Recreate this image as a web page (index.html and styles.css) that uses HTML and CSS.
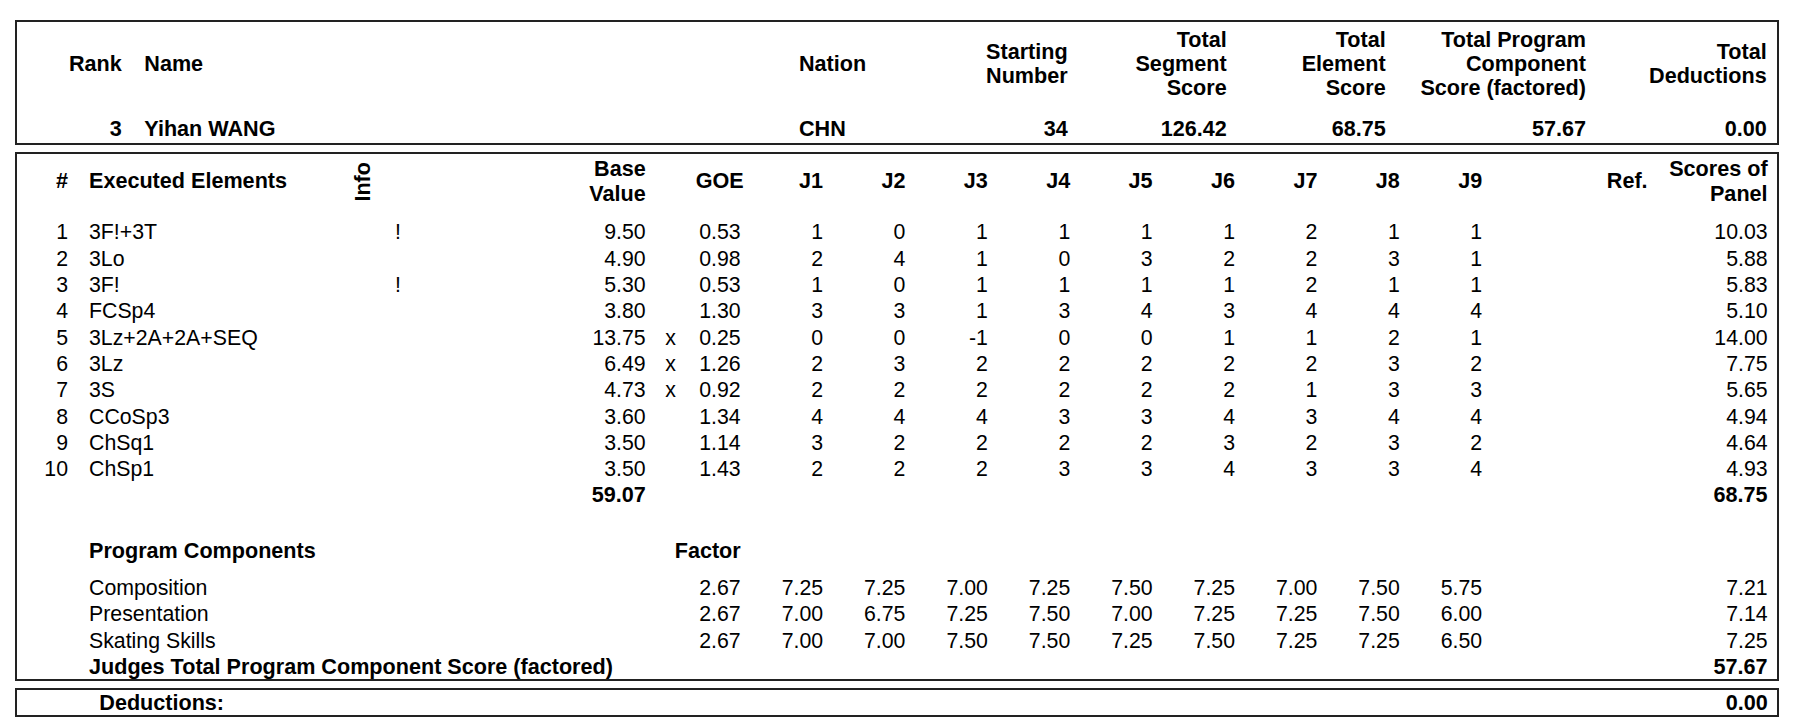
FILE: index.html
```html
<!DOCTYPE html>
<html>
<head>
<meta charset="utf-8">
<title>Judges Details per Skater</title>
<link rel="stylesheet" href="styles.css">
</head>
<body>
<div class="page">
  <div class="box summary">
    <div class="sum-grid sum-head">
      <div class="r">Rank</div>
      <div class="name">Name</div>
      <div>Nation</div>
      <div class="r">Starting<br>Number</div>
      <div class="r">Total<br>Segment<br>Score</div>
      <div class="r">Total<br>Element<br>Score</div>
      <div class="r">Total Program<br>Component<br>Score (factored)</div>
      <div class="r">Total<br>Deductions</div>
    </div>
    <div class="sum-grid sum-data">
      <div class="r">3</div>
      <div class="name">Yihan WANG</div>
      <div>CHN</div>
      <div class="r">34</div>
      <div class="r">126.42</div>
      <div class="r">68.75</div>
      <div class="r">57.67</div>
      <div class="r">0.00</div>
    </div>
  </div>

  <div class="box elements">
    <div class="eg el-head">
      <div class="r">#</div>
      <div class="name">Executed Elements</div>
      <div class="info-h">Info</div>
      <div></div>
      <div class="r">Base<br>Value</div>
      <div></div>
      <div class="r">GOE</div>
      <div class="r">J1</div><div class="r">J2</div><div class="r">J3</div><div class="r">J4</div><div class="r">J5</div><div class="r">J6</div><div class="r">J7</div><div class="r">J8</div><div class="r">J9</div>
      <div class="r">Ref.</div>
      <div class="r">Scores of<br>Panel</div>
    </div>

    <div class="rows">
      <div class="eg row">
        <div class="r">1</div><div class="name">3F!+3T</div><div></div><div class="bang">!</div>
        <div class="r">9.50</div><div class="c"></div><div class="r">0.53</div>
        <div class="r">1</div><div class="r">0</div><div class="r">1</div><div class="r">1</div><div class="r">1</div><div class="r">1</div><div class="r">2</div><div class="r">1</div><div class="r">1</div>
        <div></div><div class="r">10.03</div>
      </div>
      <div class="eg row">
        <div class="r">2</div><div class="name">3Lo</div><div></div><div class="bang"></div>
        <div class="r">4.90</div><div class="c"></div><div class="r">0.98</div>
        <div class="r">2</div><div class="r">4</div><div class="r">1</div><div class="r">0</div><div class="r">3</div><div class="r">2</div><div class="r">2</div><div class="r">3</div><div class="r">1</div>
        <div></div><div class="r">5.88</div>
      </div>
      <div class="eg row">
        <div class="r">3</div><div class="name">3F!</div><div></div><div class="bang">!</div>
        <div class="r">5.30</div><div class="c"></div><div class="r">0.53</div>
        <div class="r">1</div><div class="r">0</div><div class="r">1</div><div class="r">1</div><div class="r">1</div><div class="r">1</div><div class="r">2</div><div class="r">1</div><div class="r">1</div>
        <div></div><div class="r">5.83</div>
      </div>
      <div class="eg row">
        <div class="r">4</div><div class="name">FCSp4</div><div></div><div class="bang"></div>
        <div class="r">3.80</div><div class="c"></div><div class="r">1.30</div>
        <div class="r">3</div><div class="r">3</div><div class="r">1</div><div class="r">3</div><div class="r">4</div><div class="r">3</div><div class="r">4</div><div class="r">4</div><div class="r">4</div>
        <div></div><div class="r">5.10</div>
      </div>
      <div class="eg row">
        <div class="r">5</div><div class="name">3Lz+2A+2A+SEQ</div><div></div><div class="bang"></div>
        <div class="r">13.75</div><div class="c">x</div><div class="r">0.25</div>
        <div class="r">0</div><div class="r">0</div><div class="r">-1</div><div class="r">0</div><div class="r">0</div><div class="r">1</div><div class="r">1</div><div class="r">2</div><div class="r">1</div>
        <div></div><div class="r">14.00</div>
      </div>
      <div class="eg row">
        <div class="r">6</div><div class="name">3Lz</div><div></div><div class="bang"></div>
        <div class="r">6.49</div><div class="c">x</div><div class="r">1.26</div>
        <div class="r">2</div><div class="r">3</div><div class="r">2</div><div class="r">2</div><div class="r">2</div><div class="r">2</div><div class="r">2</div><div class="r">3</div><div class="r">2</div>
        <div></div><div class="r">7.75</div>
      </div>
      <div class="eg row">
        <div class="r">7</div><div class="name">3S</div><div></div><div class="bang"></div>
        <div class="r">4.73</div><div class="c">x</div><div class="r">0.92</div>
        <div class="r">2</div><div class="r">2</div><div class="r">2</div><div class="r">2</div><div class="r">2</div><div class="r">2</div><div class="r">1</div><div class="r">3</div><div class="r">3</div>
        <div></div><div class="r">5.65</div>
      </div>
      <div class="eg row">
        <div class="r">8</div><div class="name">CCoSp3</div><div></div><div class="bang"></div>
        <div class="r">3.60</div><div class="c"></div><div class="r">1.34</div>
        <div class="r">4</div><div class="r">4</div><div class="r">4</div><div class="r">3</div><div class="r">3</div><div class="r">4</div><div class="r">3</div><div class="r">4</div><div class="r">4</div>
        <div></div><div class="r">4.94</div>
      </div>
      <div class="eg row">
        <div class="r">9</div><div class="name">ChSq1</div><div></div><div class="bang"></div>
        <div class="r">3.50</div><div class="c"></div><div class="r">1.14</div>
        <div class="r">3</div><div class="r">2</div><div class="r">2</div><div class="r">2</div><div class="r">2</div><div class="r">3</div><div class="r">2</div><div class="r">3</div><div class="r">2</div>
        <div></div><div class="r">4.64</div>
      </div>
      <div class="eg row">
        <div class="r">10</div><div class="name">ChSp1</div><div></div><div class="bang"></div>
        <div class="r">3.50</div><div class="c"></div><div class="r">1.43</div>
        <div class="r">2</div><div class="r">2</div><div class="r">2</div><div class="r">3</div><div class="r">3</div><div class="r">4</div><div class="r">3</div><div class="r">3</div><div class="r">4</div>
        <div></div><div class="r">4.93</div>
      </div>
      <div class="eg row bold">
        <div></div><div class="name"></div><div></div><div></div>
        <div class="r">59.07</div><div></div><div></div>
        <div></div><div></div><div></div><div></div><div></div><div></div><div></div><div></div><div></div>
        <div></div><div class="r">68.75</div>
      </div>
    </div>

    <div class="eg pc-head bold">
      <div></div>
      <div class="name span-pch">Program Components</div>
      <div class="r span-factor">Factor</div>
    </div>

    <div class="pc-rows">
      <div class="eg pc-row">
        <div></div><div class="name span-pc">Composition</div>
        <div class="r">2.67</div>
        <div class="r">7.25</div><div class="r">7.25</div><div class="r">7.00</div><div class="r">7.25</div><div class="r">7.50</div><div class="r">7.25</div><div class="r">7.00</div><div class="r">7.50</div><div class="r">5.75</div>
        <div></div><div class="r">7.21</div>
      </div>
      <div class="eg pc-row">
        <div></div><div class="name span-pc">Presentation</div>
        <div class="r">2.67</div>
        <div class="r">7.00</div><div class="r">6.75</div><div class="r">7.25</div><div class="r">7.50</div><div class="r">7.00</div><div class="r">7.25</div><div class="r">7.25</div><div class="r">7.50</div><div class="r">6.00</div>
        <div></div><div class="r">7.14</div>
      </div>
      <div class="eg pc-row">
        <div></div><div class="name span-pc">Skating Skills</div>
        <div class="r">2.67</div>
        <div class="r">7.00</div><div class="r">7.00</div><div class="r">7.50</div><div class="r">7.50</div><div class="r">7.25</div><div class="r">7.50</div><div class="r">7.25</div><div class="r">7.25</div><div class="r">6.50</div>
        <div></div><div class="r">7.25</div>
      </div>
      <div class="eg pc-row bold">
        <div></div><div class="name span-total">Judges Total Program Component Score (factored)</div>
        <div class="r">57.67</div>
      </div>
    </div>
  </div>

  <div class="box deductions">
    <div class="ded-label">Deductions:</div>
    <div class="r">0.00</div>
  </div>
</div>
</body>
</html>
```

FILE: styles.css
```css
html, body {
  margin: 0;
  padding: 0;
  background: #ffffff;
}

body {
  font-family: "Liberation Sans", Arial, sans-serif;
  font-size: 21.3px;
  color: #000000;
}

.page {
  width: 1764px;
  padding: 20px 0 0 15px;
}

.box {
  border: 2px solid #222222;
  box-sizing: border-box;
}

.r { text-align: right; }
.c { text-align: center; }
.bold {
  font-weight: bold;
  font-size: 21.6px;
}

.page div { white-space: nowrap; }

/* ---------- summary box ---------- */
.summary {
  height: 125px;
  padding-top: 6.3px;
}

.sum-grid {
  display: grid;
  grid-template-columns: 104.7px 677.3px 151px 117.7px 159px 159px 200.3px 180.7px;
  font-weight: bold;
  font-size: 21.6px;
  line-height: 24px;
}

.sum-head {
  height: 72px;
  align-items: center;
}

.sum-data {
  margin-top: 17px;
}

.sum-grid .name {
  padding-left: 22.6px;
}

/* ---------- elements box ---------- */
.elements {
  margin-top: 7px;
  height: 529px;
}

.eg {
  display: grid;
  grid-template-columns: 51px 272px 46px 34px 225.7px 50px 45px repeat(9, 82.4px) 165.4px 120px;
}

.eg .name {
  padding-left: 21px;
}

.el-head {
  margin-top: 3.3px;
  height: 48.6px;
  align-items: center;
  font-weight: bold;
  font-size: 21.6px;
  line-height: 24.3px;
}

.info-h {
  writing-mode: vertical-rl;
  transform: rotate(180deg);
  justify-self: center;
  line-height: 24px;
}

.rows {
  margin-top: 13.6px;
}

.row {
  line-height: 26.3px;
}

.bang {
  padding-left: 9px;
}

.pc-head {
  margin-top: 29px;
  line-height: 26.3px;
}

.span-pch {
  grid-column: 2 / 6;
}

.span-factor {
  grid-column: 6 / 8;
}

.span-pc {
  grid-column: 2 / 7;
}

.span-total {
  grid-column: 2 / 18;
}

.pc-rows {
  margin-top: 11.1px;
}

.pc-row {
  line-height: 26.2px;
}

/* ---------- deductions box ---------- */
.deductions {
  margin-top: 7px;
  height: 29px;
  display: flex;
  justify-content: space-between;
  font-weight: bold;
  font-size: 21.6px;
  line-height: 25px;
  padding: 0 9.3px 0 82.3px;
}
```
